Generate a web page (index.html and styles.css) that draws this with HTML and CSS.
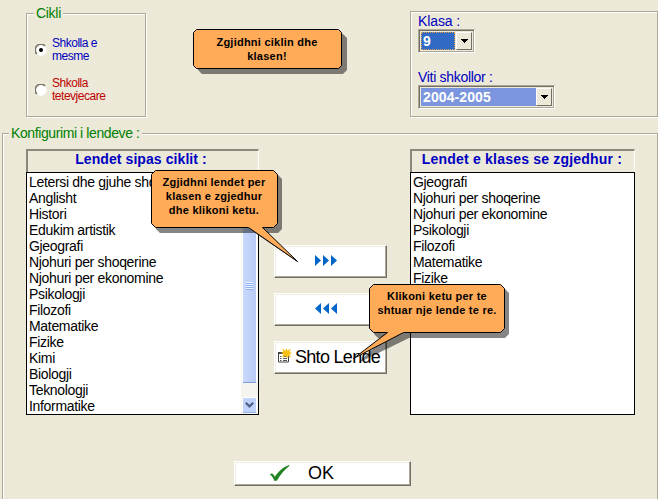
FILE: index.html
```
<!DOCTYPE html>
<html lang="sq">
<head>
<meta charset="utf-8">
<title>Konfigurimi i lendeve</title>
<link rel="stylesheet" href="styles.css">
</head>
<body>
<main class="window">
  <div class="top">
    <section class="group cycle">
      <h2 class="legend">Cikli</h2>
      <div class="option blue"><svg class="radio" width="12" height="12" viewBox="0 0 12 12"><circle cx="6" cy="6" r="5.3" fill="#fff" stroke="#fff"/><path d="M1.9 10A5.4 5.4 0 0 1 10 1.9" fill="none" stroke="#77746a" stroke-width="1.6"/><circle cx="6" cy="6" r="2" fill="#000"/></svg><span>Shkolla e<br>mesme</span></div>
      <div class="option red"><svg class="radio" width="12" height="12" viewBox="0 0 12 12"><circle cx="6" cy="6" r="5.3" fill="#fff" stroke="#fff"/><path d="M1.9 10A5.4 5.4 0 0 1 10 1.9" fill="none" stroke="#77746a" stroke-width="1.6"/></svg><span>Shkolla<br>tetevjecare</span></div>
    </section>
    <section class="group filters">
      <div class="label l1">Klasa :</div>
      <div class="combo small"><span class="value selected">9</span><span class="drop"><svg width="7" height="4" shape-rendering="crispEdges"><path d="M0 0h7L3.5 4z"/></svg></span></div>
      <div class="label l2">Viti shkollor :</div>
      <div class="combo wide"><span class="value">2004-2005</span><span class="drop"><svg width="7" height="4" shape-rendering="crispEdges"><path d="M0 0h7L3.5 4z"/></svg></span></div>
    </section>
  </div>

  <section class="group config">
    <h2 class="legend">Konfigurimi i lendeve :</h2>
    <div class="columns">
      <div class="column">
        <div class="head h-left">Lendet sipas ciklit :</div>
        <div class="box">
          <ul class="list">
            <li>Letersi dhe gjuhe shq</li><li>Anglisht</li><li>Histori</li><li>Edukim artistik</li><li>Gjeografi</li><li>Njohuri per shoqerine</li><li>Njohuri per ekonomine</li><li>Psikologji</li><li>Filozofi</li><li>Matematike</li><li>Fizike</li><li>Kimi</li><li>Biologji</li><li>Teknologji</li><li>Informatike</li>
          </ul>
          <div class="scroll">
            <div class="thumb"><i></i><i></i><i></i><i></i></div>
            <div class="down"><svg width="9" height="6" viewBox="0 0 9 6"><path d="M.8 .8L4.5 4.4 8.2 .8" fill="none" stroke="#4d6185" stroke-width="2.2"/></svg></div>
          </div>
        </div>
      </div>
      <div class="actions">
        <div class="button"><svg width="22" height="11" viewBox="0 0 22 11" fill="#0066cc"><path d="M0 0l6 5.5L0 11zM8 0l6 5.5L8 11zM16 0l6 5.5L16 11z"/></svg></div>
        <div class="button"><svg width="22" height="11" viewBox="0 0 22 11" fill="#0066cc"><path d="M6 0L0 5.5 6 11zM14 0L8 5.5 14 11zM22 0l-6 5.5 6 5.5z"/></svg></div>
        <div class="button add"><svg width="14" height="15" viewBox="0 0 14 15"><path d="M.5 4.500h10v9.500H.5z" fill="#fff" stroke="#444"/><path d="M0 4h5v2H0z" fill="#444"/><path d="M2 8.500h1.500M5 8.500h4M2 10.500h1.500M5 10.500h4M2 12.500h1.500M5 12.500h4" stroke="#555"/><path d="M8.500 0l1 2.800L13 .5l-1.500 3.500 2.500 1-2.500 1.200L13 9.500 9.800 8 9 11 7.700 8 4 9.500 5.500 6 2.500 5l3-1L4 .5l3.500 2.300z" fill="#f8bf10"/></svg><span>Shto Lende</span></div>
      </div>
      <div class="column">
        <div class="head h-right">Lendet e klases se zgjedhur :</div>
        <div class="box">
          <ul class="list">
            <li>Gjeografi</li><li>Njohuri per shoqerine</li><li>Njohuri per ekonomine</li><li>Psikologji</li><li>Filozofi</li><li>Matematike</li><li>Fizike</li>
          </ul>
        </div>
      </div>
    </div>
    <div class="button ok"><svg width="20" height="17" viewBox="0 0 20 17"><path d="M0 9.500C1.500 7.700 3 8.500 4.800 11.700 8 7 13 2 19 0l.5.7C14.500 4.500 10 10 7 15.500L4.500 16C3 12.500 2 11 0 9.500z" fill="#218321"/></svg><span>OK</span></div>
  </section>

  <div class="callout c1">
    <svg width="160" height="60"><path class="shade" d="M9 5h141l4 4v32l-4 4H9l-4-4V9z"/><path class="bubble" d="M3.500.5h142l3 3v33l-3 3h-142l-3-3v-33z"/></svg>
    <p>Zgjidhni ciklin dhe<br>klasen!</p>
  </div>
  <div class="callout c2">
    <svg width="160" height="110"><path class="shade" d="M9 5h118l4 4v50l-4 4h-16l37 30-44-30H9l-4-4V9z"/><path class="bubble" d="M4.500.5h118l4 4v49l-4 4h-11l35 34-49-34h-93l-4-4v-49z"/></svg>
    <p>Zgjidhni lendet per<br>klasen e zgjedhur<br>dhe klikoni ketu.</p>
  </div>
  <div class="callout c3">
    <svg width="160" height="90"><path class="shade" d="M25 5h117l10 0 4 4v41l-4 4H56L5 79l26-25h-6l-4-4V9z"/><path class="bubble" d="M20.500.5h127l4 4v40l-4 4h-97l-50 26 34-26h-14l-4-4v-40z"/></svg>
    <p>Klikoni ketu per te<br>shtuar nje lende te re.</p>
  </div>
</main>
</body>
</html>
```

FILE: styles.css
```
* { box-sizing: border-box; }
body { margin: 0; background: #ece9d8; font: 14px/16px "Liberation Sans", sans-serif; color: #000; }
.window { position: relative; width: 658px; height: 499px; overflow: hidden; }
svg { display: block; flex: none; }

.top { display: flex; justify-content: space-between; align-items: flex-start; height: 133px; padding: 11px 0 0 26px; }
.group { border: 1px solid #aca899; box-shadow: inset 1px 1px #fff, 1px 1px #fff; }
.legend { width: max-content; margin: 0; padding: 0 2px; font-size: 14px; font-weight: 400; line-height: 16px; color: #008000; background: #ece9d8; white-space: nowrap; }
.cycle { width: 120px; height: 104px; margin-top: 2px; padding-left: 7px; }
.cycle .legend { margin-top: -9px; letter-spacing: -.3px; }
.option { display: flex; align-items: center; gap: 5px; height: 26px; padding-left: 1px; font-size: 12px; line-height: 13px; letter-spacing: -.48px; }
.option.blue { margin-top: 16px; color: #0000c0; }
.option.red { margin-top: 14px; color: #c00000; }

.filters { width: 248px; height: 106px; padding: 1px 0 0 7px; color: #0000c0; }
.label { height: 16px; letter-spacing: -.3px; white-space: nowrap; }
.l1 { letter-spacing: -.1px; }
.l2 { margin-top: 16px; }
.combo { display: flex; height: 24px; border: 1px solid; border-color: #aca899 #fff #fff #aca899; box-shadow: inset 1px 1px #716f64, inset -1px -1px #aca899; padding: 2px; color: #fff; font-weight: 700; line-height: 19px; }
.small { width: 57px; }
.wide { width: 137px; }
.value { flex: 1; padding-left: 2px; background: #7b96df; letter-spacing: .1px; }
.selected { margin: 0 1px 0 0; line-height: 17px; background: #316ac5; border: 1px dotted #e0a050; padding-left: 1px; }
.drop { display: grid; place-items: center; width: 16px; background: #ece9d8; border: 1px solid; border-color: #fff #716f64 #716f64 #fff; }

.config { width: 656px; height: 380px; margin-left: 2px; padding-left: 6px; }
.config .legend { margin-top: -9px; letter-spacing: -.4px; }
.columns { display: grid; grid-template-columns: 233px 113px 225px; column-gap: 15px; margin: 8px 0 0 17px; height: 266px; }
.columns > :last-child { margin-left: 8px; width: 225px; }
.column { display: flex; flex-direction: column; }
.head { height: 23px; border: solid; border-width: 2px 1px 0 2px; border-color: #8c897c #fff #fff #8c897c; color: #0000c0; font-weight: 700; line-height: 17px; text-align: center; white-space: nowrap; }
.h-left { letter-spacing: .08px; padding-right: 4px; }
.h-right { letter-spacing: .2px; padding-right: 2px; }
.box { display: flex; height: 243px; border: 1px solid #000; background: #fff; }
.list { flex: 1; min-width: 0; margin: 0; padding: 1px 0 0 2px; list-style: none; overflow: hidden; white-space: nowrap; letter-spacing: -.32px; }
.list li { height: 16px; }
.scroll { display: flex; flex-direction: column; justify-content: space-between; width: 17px; padding: 17px 1px 1px; background: #f5f4ee; }
.thumb { display: flex; flex-direction: column; align-items: center; justify-content: center; gap: 1px; height: 193px; border: 1px solid #fff; border-bottom: 1px solid #7d9ed3; border-radius: 2px; background: linear-gradient(90deg, #c9d8fc, #b8cbf6); }
.thumb i { width: 7px; height: 1px; background: #8cb0f8; box-shadow: 0 -1px #eef4fe; }
.down { display: grid; place-items: center; height: 16px; border: 1px solid #fff; border-bottom-color: #98b0e8; border-radius: 2px; background: #c1d2fc; }

.actions { display: flex; flex-direction: column; gap: 15px; padding-top: 96px; }
.button { display: flex; align-items: center; justify-content: center; height: 33px; background: #fff; border: 1px solid; border-color: #fff #716f64 #716f64 #fff; box-shadow: inset -1px -1px #aca899, inset 1px 1px #f1efe2; }
.actions .button { padding: 0 9px 3px 0; }
.actions .add { justify-content: flex-start; gap: 3px; padding: 0 0 2px 3px; font-size: 18px; letter-spacing: -.7px; white-space: nowrap; }
.add svg { margin-top: -3px; }
.ok { width: 177px; height: 25px; margin: 46px 0 0 225px; justify-content: flex-start; padding: 0 0 1px 35px; gap: 18px; font-size: 18px; }

.callout { position: absolute; }
.callout svg { position: absolute; inset: 0 auto auto 0; }
.callout p { position: relative; margin: 0; font-size: 11px; font-weight: 700; line-height: 14px; letter-spacing: .24px; text-align: center; white-space: nowrap; }
.bubble { fill: #ffab58; stroke: #000; }
.shade { fill: #000; fill-opacity: .48; }
.c1 { left: 193px; top: 29px; width: 148px; padding-top: 6px; }
.c2 { left: 151px; top: 170px; width: 126px; padding-top: 5px; }
.c3 { left: 353px; top: 284px; width: 152px; padding: 5px 0 0 16px; }
```
